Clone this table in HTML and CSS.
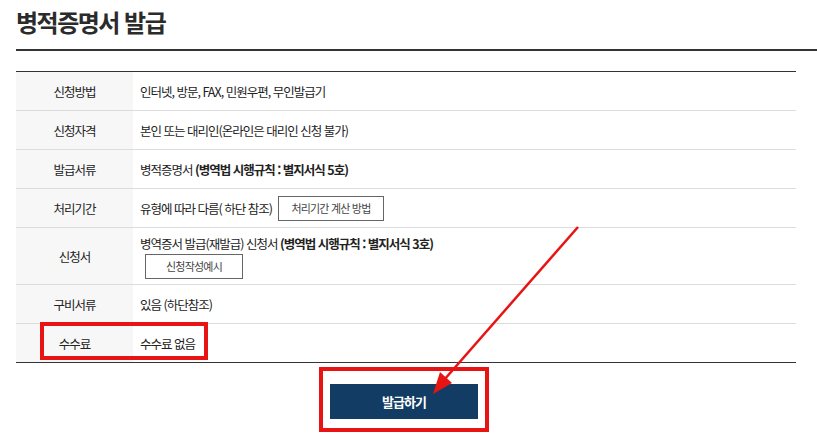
FILE: index.html
```html
<!DOCTYPE html>
<html lang="ko">
<head>
<meta charset="utf-8">
<title>병적증명서 발급</title>
<link rel="stylesheet" href="styles.css">
</head>
<body>
<div class="page">
  <h1 class="title">병적증명서 발급</h1>
  <div class="info">
    <div class="row"><div class="th">신청방법</div><div class="td">인터넷, 방문, FAX, 민원우편, 무인발급기</div></div>
    <div class="row"><div class="th">신청자격</div><div class="td">본인 또는 대리인(온라인은 대리인 신청 불가)</div></div>
    <div class="row"><div class="th">발급서류</div><div class="td">병적증명서&nbsp;<b>(병역법 시행규칙 : 별지서식 5호)</b></div></div>
    <div class="row"><div class="th">처리기간</div><div class="td">유형에 따라 다름( 하단 참조) <span class="btn-line">처리기간 계산 방법</span></div></div>
    <div class="row row-tall"><div class="th">신청서</div><div class="td td-stack"><div>병역증서 발급(재발급) 신청서 <b>(병역법 시행규칙 : 별지서식 3호)</b></div><span class="btn-line btn-sample">신청작성예시</span></div></div>
    <div class="row"><div class="th">구비서류</div><div class="td">있음 (하단참조)</div></div>
    <div class="row"><div class="th">수수료</div><div class="td">수수료 없음</div></div>
  </div>
  <div class="actions"><button class="issue" type="button">발급하기</button></div>
  <div class="mark mark-fee"></div>
  <div class="mark mark-btn"></div>
  <svg class="arrow" width="817" height="436" viewBox="0 0 817 436">
    <line x1="578" y1="227" x2="444" y2="380" stroke="#e81414" stroke-width="2.5"/>
    <polygon points="433,394 452,383 440,372" fill="#e81414"/>
  </svg>
</div>
</body>
</html>
```
FILE: styles.css
```css
* { box-sizing: border-box; }
html, body { margin: 0; padding: 0; background: #fff; }
body {
  font-family: "Noto Sans CJK KR", "Noto Sans", sans-serif;
  color: #333;
  width: 817px;
  height: 436px;
  overflow: hidden;
}
.page { position: relative; width: 817px; height: 436px; padding-left: 16px; }
.title {
  margin: 0;
  height: 51px;
  padding-top: 5px;
  font-size: 24px;
  line-height: 34px;
  font-weight: 700;
  letter-spacing: -1.5px;
  color: #2b2b2b;
  border-bottom: 2px solid #333;
}
.info {
  margin-top: 20px;
  width: 780px;
  border-top: 1px solid #333;
  border-bottom: 1px solid #333;
}
.row {
  display: grid;
  grid-template-columns: 117px 1fr;
  height: 39px;
  border-bottom: 1px solid #dcdcdc;
}
.row:last-child { border-bottom: none; height: 38px; }
.row-tall { height: 57px; }
.th {
  background: #f7f7f7;
  display: flex;
  align-items: center;
  justify-content: center;
  font-size: 12.5px;
  letter-spacing: -1px;
  color: #222;
}
.td {
  display: flex;
  align-items: center;
  padding-left: 7px;
  font-size: 12.5px;
  letter-spacing: -1px;
  color: #222;
  white-space: nowrap;
}
.td b { font-weight: 700; }
.td-stack { flex-direction: column; align-items: flex-start; justify-content: center; gap: 1px; }
.btn-line {
  display: inline-flex;
  align-items: center;
  justify-content: center;
  height: 25px;
  border: 1px solid #666;
  background: #fff;
  font-size: 11px;
  letter-spacing: -0.8px;
  color: #444;
  margin-left: 6px;
  width: 106px;
}
.btn-sample { margin-left: 5px; width: 98px; }
.actions {
  width: 780px;
  display: flex;
  justify-content: center;
  padding-top: 21px;
}
.issue {
  width: 148px;
  height: 35px;
  border: none;
  background: #123c63;
  color: #fff;
  font-family: "Noto Sans CJK KR", "Noto Sans", sans-serif;
  font-size: 13px;
  font-weight: 700;
  letter-spacing: -1px;
  margin-left: -4px;
}
.mark { position: absolute; border: 4px solid #e81414; }
.mark-fee { left: 40px; top: 322px; width: 168px; height: 38px; }
.mark-btn { left: 319px; top: 367px; width: 170px; height: 65px; }
.arrow { position: absolute; left: 0; top: 0; pointer-events: none; }
```
